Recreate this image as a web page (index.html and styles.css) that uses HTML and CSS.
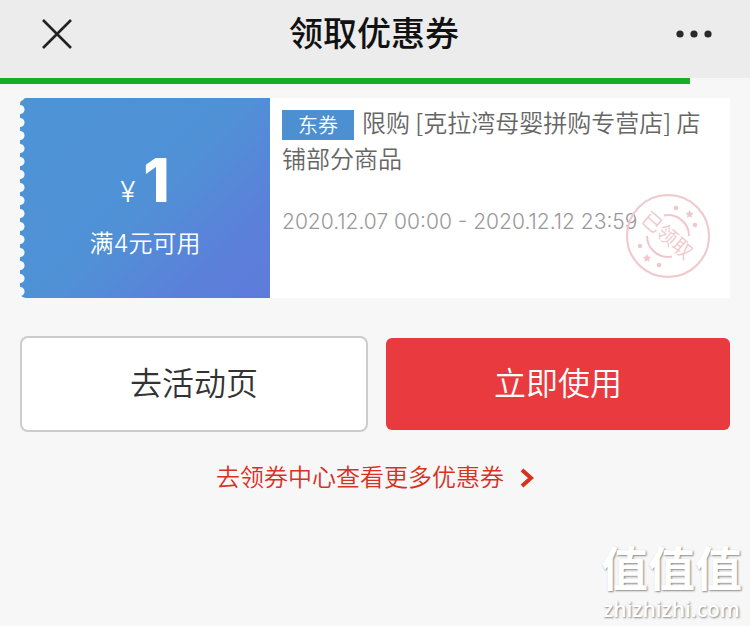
FILE: index.html
```html
<!DOCTYPE html>
<html lang="zh-CN">
<head>
    <meta charset="UTF-8">
    <meta name="viewport" content="width=device-width, initial-scale=1.0">
    <title>领取优惠券</title>
    <link rel="stylesheet" href="styles.css">
</head>
<body>
    <header class="navbar">
        <button type="button" class="nav-btn" aria-label="关闭">
            <svg width="30" height="30" viewBox="0 0 30 30" fill="none" stroke="#222" stroke-width="2.6">
                <path d="M1 1L29 29M29 1L1 29"/>
            </svg>
        </button>
        <h1 class="nav-title">领取优惠券</h1>
        <button type="button" class="nav-btn" aria-label="更多">
            <svg width="36" height="8" viewBox="0 0 36 8" fill="#2a2a2a">
                <circle cx="4" cy="4" r="3.6"/>
                <circle cx="18" cy="4" r="3.6"/>
                <circle cx="32" cy="4" r="3.6"/>
            </svg>
        </button>
    </header>
    <div class="progress"><div class="progress-bar" style="width: 92%"></div></div>

    <main class="content">
        <section class="coupon">
            <div class="coupon-price">
                <div class="amount"><span class="currency">¥</span><strong>1</strong></div>
                <div class="condition">满4元可用</div>
            </div>
            <div class="coupon-info">
                <p class="coupon-desc"><span class="tag">东券</span>限购 [克拉湾母婴拼购专营店] 店铺部分商品</p>
                <p class="coupon-date">2020.12.07 00:00 - 2020.12.12 23:59</p>
                <svg class="stamp" width="84" height="84" viewBox="0 0 84 84" fill="none" stroke="#f0c8cb" stroke-width="2">
                    <circle cx="42" cy="42" r="41"/>
                    <path d="M38 21.500A21 21 0 0 1 63 42"/>
                    <path d="M21 42A21 21 0 0 0 46 62.500"/>
                    <g fill="#f0c8cb" stroke="none">
                        <circle cx="50" cy="14" r="2.300"/>
                        <path d="M63.500 16l1.200 2.600 2.900.4-2.100 2 .5 2.800-2.500-1.300-2.500 1.300.5-2.800-2.100-2 2.900-.4z"/>
                        <circle cx="69" cy="31" r="2.300"/>
                        <circle cx="14" cy="52" r="2.300"/>
                        <path d="M21 60l1.200 2.600 2.900.4-2.100 2 .5 2.800-2.500-1.300-2.500 1.300.5-2.800-2.100-2 2.900-.4z"/>
                        <circle cx="33" cy="71" r="2.300"/>
                    </g>
                    <text class="stamp-text" x="41" y="49" text-anchor="middle" transform="rotate(41 42 42)">已领取</text>
                </svg>
            </div>
        </section>

        <div class="actions">
            <button type="button" class="btn btn-plain">去活动页</button>
            <button type="button" class="btn btn-primary">立即使用</button>
        </div>

        <a href="#" class="more-link">去领券中心查看更多优惠券
            <svg width="14" height="20" viewBox="0 0 14 20" fill="none" stroke="#d9301f" stroke-width="4">
                <path d="M2 2L11 10L2 18"/>
            </svg>
        </a>
    </main>

    <div class="watermark">
        <div class="watermark-logo">值值值</div>
        <div class="watermark-url">zhizhizhi.com</div>
    </div>
</body>
</html>
```
FILE: styles.css
```css
* {
    box-sizing: border-box;
}
body {
    margin: 0;
    min-height: 100vh;
    position: relative;
    background: #f7f7f7;
    font-family: Inter, "Noto Sans CJK SC", sans-serif;
    font-weight: 350;
    color: #333;
}
.navbar {
    display: flex;
    align-items: center;
    justify-content: space-between;
    height: 78px;
    padding: 0 38px 10px 42px;
    background: #ececec;
}
.nav-btn {
    display: flex;
    padding: 0;
    border: none;
    background: none;
    cursor: pointer;
}
.nav-title {
    margin: 0;
    font-size: 34px;
    font-weight: 500;
    line-height: 48px;
    color: #111;
}
.progress {
    height: 6px;
}
.progress-bar {
    height: 100%;
    background: #18ad27;
}
.content {
    padding: 14px 20px;
}
.coupon {
    display: flex;
    min-height: 200px;
    background: white;
}
.coupon-price {
    flex: 0 0 250px;
    display: flex;
    flex-direction: column;
    align-items: center;
    padding-top: 46px;
    /* ticket edge on the left */
    background:
        radial-gradient(circle at 0 50%, #f4fbff 4px, transparent 5px) 0 5px / 6px 13px repeat-y,
        linear-gradient(135deg, #4d94d6 0%, #5091d6 50%, #5b80da 80%, #5f7bdb 100%);
    border-radius: 6px 0 0 6px;
    color: white;
}
.amount {
    display: flex;
    align-items: baseline;
    gap: 8px;
    height: 72px;
    font-size: 60px;
    line-height: 72px;
}
.amount strong {
    font-weight: 800;
}
.currency {
    font-size: 28px;
}
.condition {
    margin-top: 10px;
    font-size: 24px;
    line-height: 36px;
}
.coupon-info {
    flex: 1;
    position: relative;
    padding: 6px 20px 6px 12px;
}
.coupon-desc {
    margin: 0;
    font-family: "Noto Sans CJK SC", sans-serif;
    font-size: 24px;
    line-height: 36px;
    color: #666;
}
.tag {
    display: inline-block;
    margin-right: 8px;
    padding: 0 16px;
    background: #4d90d2;
    color: white;
    font-size: 20px;
    line-height: 30px;
    vertical-align: middle;
}
.coupon-date {
    margin: 34px 0 0;
    font-size: 21px;
    line-height: 24px;
    color: #999;
}
.stamp {
    position: absolute;
    right: 20px;
    bottom: 20px;
}
.stamp-text {
    fill: #f0c8cb;
    stroke: none;
    font-size: 20px;
}
.actions {
    display: flex;
    gap: 20px;
    margin-top: 40px;
    padding-left: 2px;
}
.btn {
    flex: 1;
    height: 92px;
    padding: 0 0 6px;
    border: none;
    border-radius: 6px;
    font-family: inherit;
    font-size: 32px;
    font-weight: inherit;
    cursor: pointer;
}
.btn-plain {
    background: white;
    color: #333;
    box-shadow: 0 0 0 2px #ccc;
}
.btn-primary {
    background: #e93b3f;
    color: white;
}
.more-link {
    display: flex;
    align-items: center;
    justify-content: center;
    gap: 16px;
    margin-top: 30px;
    font-size: 24px;
    line-height: 36px;
    color: #d9301f;
    text-decoration: none;
}
.watermark {
    position: absolute;
    right: 8px;
    bottom: 4px;
    text-align: center;
    color: white;
    text-shadow: 1px 1px 2px #888;
}
.watermark-logo {
    font-size: 47px;
    font-weight: 700;
    line-height: 54px;
}
.watermark-url {
    font-family: "Open Sans", sans-serif;
    font-size: 21px;
    font-weight: 600;
    line-height: 26px;
}
```
